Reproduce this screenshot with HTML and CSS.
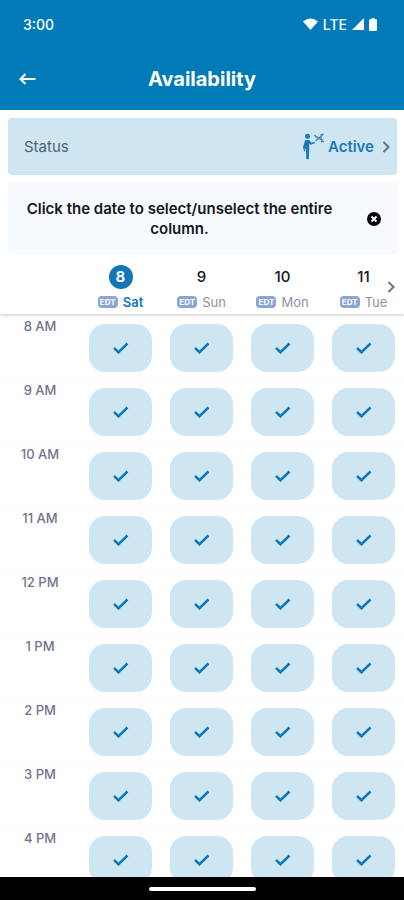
FILE: index.html
```html
<!DOCTYPE html>
<html lang="en">
<head>
<meta charset="utf-8">
<meta name="viewport" content="width=device-width, initial-scale=1">
<title>Availability</title>
<link rel="stylesheet" href="styles.css">
</head>
<body>
<svg class="sprite" aria-hidden="true">
  <symbol id="chevron" viewBox="0 0 8 12"><path d="M1.500 1l5 5-5 5" fill="none" stroke="currentColor" stroke-width="2"/></symbol>
  <symbol id="check" viewBox="0 0 16 12"><path d="M1 6l4.500 4.200L14.500 1.500" fill="none" stroke="currentColor" stroke-width="2.500"/></symbol>
</svg>
<div class="app">
  <header class="top">
    <div class="system">
      <span class="clock">3:00</span>
      <span class="signals">
        <svg width="15" height="12" viewBox="0 0 15 12"><path d="M0 3.500Q7.500-2.500 15 3.500L7.500 12z" fill="currentColor"/></svg>
        <span>LTE</span>
        <svg width="12" height="12" viewBox="0 0 12 12"><path d="M12 0v12H0z" fill="currentColor"/></svg>
        <svg class="battery" width="8" height="13" viewBox="0 0 8 13"><path d="M2.500 0h3v1.200H7q1 0 1 1V12q0 1-1 1H1q-1 0-1-1V2.200q0-1 1-1h1.500z" fill="currentColor"/></svg>
      </span>
    </div>
    <div class="title-bar">
      <button class="back" type="button" aria-label="Back">
        <svg width="17" height="12" viewBox="0 0 17 12"><path d="M16.500 6H2M6.500 1L1.500 6l5 5" fill="none" stroke="currentColor" stroke-width="2"/></svg>
      </button>
      <h1>Availability</h1>
    </div>
  </header>
  <section class="cards">
    <button class="status" type="button">
      <span class="status-label">Status</span>
      <svg width="22" height="28" viewBox="0 0 22 28">
        <g fill="#1b78b8"><circle cx="4.500" cy="3.300" r="2.500"/><path d="M2.300 7h4l2 2.800 3.200-1 .5 1.500-4.500 1.500-1.300-1.500v6l-.4 10H3.300l-.3-9.500L1.500 15l.8 3L1 18.500 0 14z"/></g>
        <g fill="none" stroke="#5589ad" stroke-width="1.500"><path d="M12 3l8 4.500M12.500 8L20 1.500M14 5.500l5-.5M11.500 2l2 2.500M20.500 1l-3 1M18 8.500h3"/></g>
      </svg>
      <span class="status-value">Active</span>
      <svg class="chevron" width="8" height="12"><use href="#chevron"/></svg>
    </button>
    <div class="notice">
      <p>Click the date to select/unselect the entire column.</p>
      <button type="button" aria-label="Dismiss">
        <svg width="14" height="14" viewBox="0 0 14 14"><circle cx="7" cy="7" r="7" fill="#080808"/><path d="M4.500 4.500l5 5M9.500 4.500l-5 5" stroke="#fff" stroke-width="1.800"/></svg>
      </button>
    </div>
  </section>
  <nav class="days" aria-label="Days">
    <button class="day selected" type="button"><span class="date">8</span><span class="weekday"><small>EDT</small>Sat</span></button>
    <button class="day" type="button"><span class="date">9</span><span class="weekday"><small>EDT</small>Sun</span></button>
    <button class="day" type="button"><span class="date">10</span><span class="weekday"><small>EDT</small>Mon</span></button>
    <button class="day" type="button"><span class="date">11</span><span class="weekday"><small>EDT</small>Tue</span></button>
    <button class="next" type="button" aria-label="Next days"><svg class="chevron" width="8" height="12"><use href="#chevron"/></svg></button>
  </nav>
  <main class="schedule">
    <table><tbody id="hours"></tbody></table>
  </main>
  <footer class="gesture"><span></span></footer>
</div>
<script src="app.js"></script>
</body>
</html>
```
FILE: styles.css
```css
* { box-sizing: border-box; }
body { margin: 0; font-family: Inter, "Liberation Sans", sans-serif; background: #fff; color: #14161c; }
button { border: 0; padding: 0; background: none; font: inherit; color: inherit; cursor: pointer; }
svg { display: block; flex: none; }
.sprite { position: absolute; width: 0; height: 0; }
.app { display: flex; flex-direction: column; height: 100vh; }

.top { background: #007bb8; color: #fff; }
.system { display: flex; justify-content: space-between; align-items: center; height: 48px; padding: 0 27px 0 23px; font-size: 14px; font-weight: 500; }
.signals { display: flex; align-items: center; gap: 5px; }
.title-bar { display: grid; grid-template-columns: 56px 1fr 56px; align-items: center; height: 62px; }
.back { display: flex; align-items: center; height: 48px; padding-left: 19px; }
h1 { margin: 0; text-align: center; font-size: 20px; line-height: 24px; font-weight: 700; }

.cards { display: flex; flex-direction: column; gap: 8px; padding: 8px 7px 0 8px; }
.status { display: flex; align-items: center; height: 57px; padding: 0 7px 0 16px; border-radius: 4px; background: #cde6f1; font-size: 15px; }
.status-label { flex: 1; text-align: left; color: #4d6475; }
.status-value { margin: 0 8px 0 3px; color: #1b78b8; font-weight: 600; }
.chevron { color: #657583; }
.notice { display: flex; align-items: center; min-height: 71px; padding: 0 16px 0 12px; background: #f6fafe; }
.notice p { flex: 1; margin: 0 28px 0 0; text-align: center; font-size: 15px; line-height: 20px; font-weight: 600; }

.days { position: relative; z-index: 1; display: grid; grid-template-columns: 80px repeat(4, 1fr); height: 60px; box-shadow: 0 2px 2px rgba(0, 0, 0, .14); background: #fff; }
.day { display: flex; flex-direction: column; align-items: center; padding-top: 11px; }
.day:first-child { grid-column: 2; }
.date { width: 24px; height: 24px; border-radius: 50%; font-size: 15px; line-height: 24px; font-weight: 500; }
.weekday { display: flex; align-items: center; gap: 5px; margin-top: 5px; font-size: 13px; line-height: 16px; color: #8e93a1; }
.weekday small { width: 20px; border-radius: 4px; background: #8ba5d4; color: #fff; font-size: 8px; line-height: 12px; font-weight: 700; }
.selected .date { background: #1177b6; color: #fff; font-weight: 700; }
.selected .weekday { color: #1177b6; font-weight: 600; }
.next { position: absolute; right: 9px; top: 24px; padding: 3px 0; }

.schedule { flex: 1; min-height: 0; overflow-y: auto; padding-top: 2px; scrollbar-width: none; }
table { width: 100%; table-layout: fixed; border-collapse: collapse; }
tr { height: 64px; }
tr + tr { box-shadow: inset 0 1px #f4f6f8; }
th { width: 80px; padding: 2px 0 0; vertical-align: top; font-size: 13px; line-height: 16px; font-weight: 500; color: #6f748b; }
td { padding: 8px 9px; vertical-align: top; }
.slot { display: grid; place-items: center; height: 48px; border-radius: 16px; background: #cde6f1; color: #1177b6; cursor: pointer; }
.slot input, .slot svg { grid-area: 1 / 1; }
.slot input { appearance: none; width: 100%; height: 100%; margin: 0; border-radius: 16px; }
.slot svg { pointer-events: none; }
.slot input:not(:checked) + svg { visibility: hidden; }

.gesture { display: grid; place-items: center; height: 23px; background: #000; }
.gesture span { width: 107px; height: 4px; border-radius: 2px; background: #fff; }
```
FILE: app.js
```js
const days = ["Sat 8", "Sun 9", "Mon 10", "Tue 11"];
const hours = ["8 AM", "9 AM", "10 AM", "11 AM", "12 PM", "1 PM", "2 PM", "3 PM", "4 PM"];

document.getElementById("hours").innerHTML = hours.map(hour => `
  <tr>
    <th scope="row">${hour}</th>
    ${days.map(day => `<td><label class="slot"><input type="checkbox" checked aria-label="${day}, ${hour}"><svg width="16" height="12"><use href="#check"/></svg></label></td>`).join("")}
  </tr>`).join("");
```
